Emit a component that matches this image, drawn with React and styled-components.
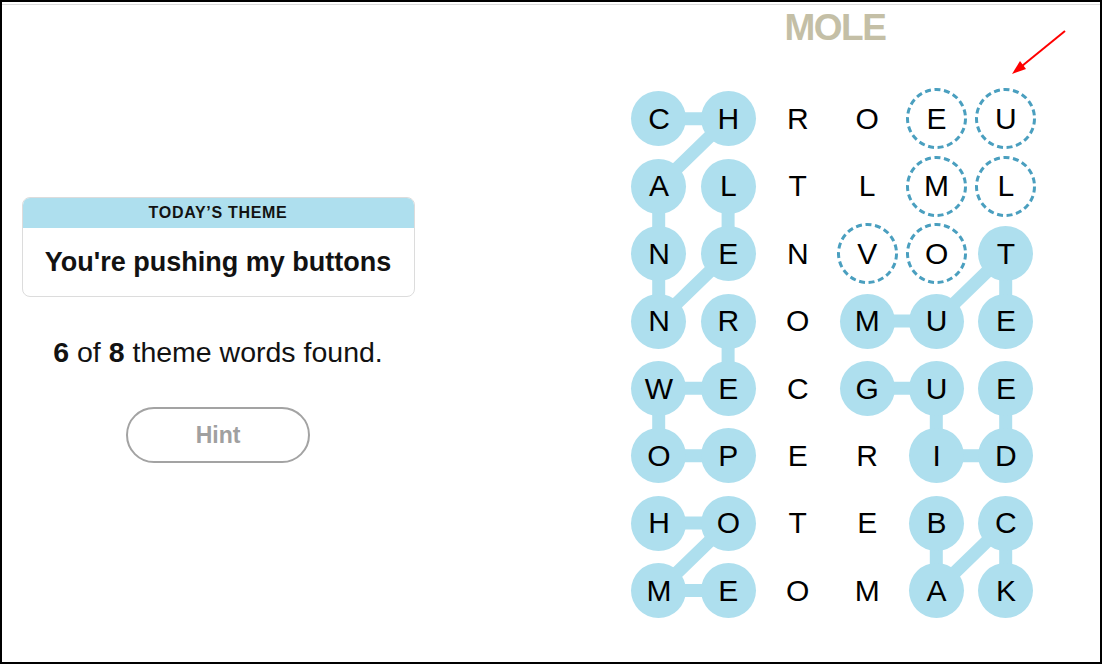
import React from "react";
import styled, { createGlobalStyle } from "styled-components";

const GlobalStyle = createGlobalStyle`
  html, body {
    margin: 0;
    padding: 0;
    background: #fff;
  }
  body {
    font-family: "Liberation Sans", Arial, sans-serif;
    color: #121212;
  }
`;

const COL = 69.4;
const ROW = 67.4;

const letters = [
  "CHROEU",
  "ALTLML",
  "NENVOT",
  "NROMUE",
  "WECGUE",
  "OPERID",
  "HOTEBC",
  "MEOMAK",
];

// found theme words, as [row, col] paths
const found = [
  [[0, 0], [0, 1], [1, 0], [2, 0], [3, 0], [2, 1], [1, 1]],
  [[5, 1], [5, 0], [4, 0], [4, 1], [3, 1]],
  [[6, 0], [6, 1], [7, 0], [7, 1]],
  [[3, 3], [3, 4], [2, 5], [3, 5]],
  [[4, 3], [4, 4], [5, 4], [5, 5], [4, 5]],
  [[6, 4], [7, 4], [6, 5], [7, 5]],
];

const hinted = [[2, 3], [2, 4], [1, 5], [0, 5], [1, 4], [0, 4]];

const key = (r, c) => `${r}-${c}`;
const foundSet = new Set(found.flat().map(([r, c]) => key(r, c)));
const hintSet = new Set(hinted.map(([r, c]) => key(r, c)));

function HintRing() {
  return (
    <Ring viewBox="0 0 61 61">
      <circle
        cx="30.5"
        cy="30.5"
        r="29"
        fill="none"
        stroke="#4a9fbf"
        strokeWidth="3"
        strokeDasharray="6 3.6"
      />
    </Ring>
  );
}

function App() {
  return (
    <>
      <GlobalStyle />
      <Frame>
        <TopRule />
        <Main>
          <Side>
            <ThemeCard>
              <ThemeHeader>Today’s Theme</ThemeHeader>
              <ThemeBody>You're pushing my buttons</ThemeBody>
            </ThemeCard>
            <Progress>
              <b>6</b> of <b>8</b> theme words found.
            </Progress>
            <HintButton>Hint</HintButton>
          </Side>
          <BoardColumn>
            <CurrentWord>MOLE</CurrentWord>
            <Board>
              <Connectors width={COL * 6} height={ROW * 8}>
                {found.map((path, i) => (
                  <polyline
                    key={i}
                    points={path
                      .map(([r, c]) => `${(c + 0.5) * COL},${(r + 0.5) * ROW}`)
                      .join(" ")}
                    fill="none"
                    stroke="#aedfee"
                    strokeWidth="13"
                    strokeLinejoin="round"
                  />
                ))}
              </Connectors>
              {letters.map((row, r) =>
                row.split("").map((ch, c) => {
                  const hint = hintSet.has(key(r, c));
                  return (
                    <Cell key={key(r, c)}>
                      <Letter $found={foundSet.has(key(r, c))}>
                        {hint && <HintRing />}
                        {ch}
                      </Letter>
                    </Cell>
                  );
                })
              )}
            </Board>
          </BoardColumn>
        </Main>
        <Arrow width="80" height="70" viewBox="0 0 80 70">
          <line x1="65" y1="11" x2="22" y2="46" stroke="#ff0000" strokeWidth="2" />
          <polygon points="12,54 26,49 20,41" fill="#ff0000" />
        </Arrow>
      </Frame>
    </>
  );
}

export default App;

const Frame = styled.div`
  position: relative;
  width: 1102px;
  height: 664px;
  box-sizing: border-box;
  border: 2px solid #000;
  overflow: hidden;
`;

const TopRule = styled.div`
  margin-top: 2px;
  border-top: 1px solid #dcdcdc;
`;

const Main = styled.div`
  display: flex;
`;

const Side = styled.div`
  width: 432px;
  padding-top: 192px;
  display: flex;
  flex-direction: column;
  align-items: center;
`;

const ThemeCard = styled.div`
  width: 393px;
  box-sizing: border-box;
  border: 1px solid #dcdcdc;
  border-radius: 8px;
  overflow: hidden;
  background: #fff;
`;

const ThemeHeader = styled.div`
  height: 30px;
  background: #aedfee;
  display: flex;
  align-items: center;
  justify-content: center;
  font-size: 16px;
  font-weight: 700;
  letter-spacing: 0.7px;
  text-transform: uppercase;
  color: #121212;
`;

const ThemeBody = styled.div`
  height: 68px;
  display: flex;
  align-items: center;
  justify-content: center;
  font-size: 27px;
  font-weight: 700;
  color: #121212;
`;

const Progress = styled.p`
  margin: 39px 0 0;
  line-height: 32px;
  font-size: 28.5px;
  color: #121212;

  b {
    font-weight: 700;
  }
`;

const HintButton = styled.button`
  margin-top: 39px;
  width: 184px;
  height: 56px;
  box-sizing: border-box;
  border: 2px solid #a3a3a3;
  border-radius: 28px;
  background: #fff;
  font-family: "Liberation Sans", Arial, sans-serif;
  font-size: 23px;
  font-weight: 700;
  color: #a0a0a0;
  cursor: default;
`;

const BoardColumn = styled.div`
  padding-left: 190.3px;
  display: flex;
  flex-direction: column;
`;

const CurrentWord = styled.div`
  margin-top: 3px;
  height: 40px;
  line-height: 40px;
  padding-left: 5px;
  text-align: center;
  font-size: 37px;
  font-weight: 700;
  letter-spacing: -1.5px;
  color: #c4bfa6;
`;

const Board = styled.div`
  position: relative;
  margin-top: 37.3px;
  display: grid;
  grid-template-columns: repeat(6, ${COL}px);
  grid-template-rows: repeat(8, ${ROW}px);
`;

const Connectors = styled.svg`
  position: absolute;
  left: 0;
  top: 0;
  z-index: 0;
`;

const Cell = styled.div`
  position: relative;
  z-index: 1;
  display: flex;
  align-items: center;
  justify-content: center;
`;

const Letter = styled.div`
  position: relative;
  width: 55px;
  height: 55px;
  border-radius: 50%;
  display: flex;
  align-items: center;
  justify-content: center;
  font-size: 30px;
  color: #000;
  background: ${(p) => (p.$found ? "#aedfee" : "transparent")};
`;

const Ring = styled.svg`
  position: absolute;
  left: -3px;
  top: -3px;
  width: 61px;
  height: 61px;
`;

const Arrow = styled.svg`
  position: absolute;
  left: 998px;
  top: 18px;
`;
